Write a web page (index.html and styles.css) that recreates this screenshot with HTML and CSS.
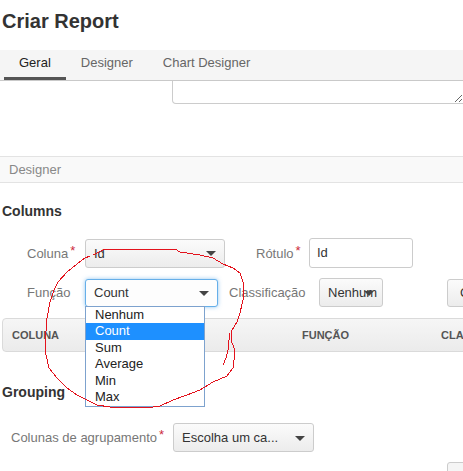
FILE: index.html
```html
<!DOCTYPE html>
<html lang="pt">
<head>
    <meta charset="UTF-8">
    <link rel="stylesheet" href="styles.css">
    <title>Criar Report</title>
</head>
<body>
    <header class="page-head">
        <h1>Criar Report</h1>
    </header>

    <nav class="tabs">
        <a class="tab active">Geral</a>
        <a class="tab">Designer</a>
        <a class="tab">Chart Designer</a>
    </nav>

    <div class="desc-wrap">
        <textarea class="desc"></textarea>
    </div>

    <div class="panel-title">Designer</div>

    <h2 class="section">Columns</h2>

    <div class="field-row row-col">
        <label class="lbl lbl-col">Coluna<span class="req">*</span></label>
        <div class="pick pick-col">Id<span class="caret"></span></div>
        <label class="lbl lbl-rot">Rótulo<span class="req">*</span></label>
        <div class="text-input">Id</div>
    </div>

    <div class="field-row row-fn">
        <label class="lbl lbl-col">Função</label>
        <div class="pick pick-fn">Count<span class="caret"></span>
            <ul class="options">
                <li>Nenhum</li>
                <li class="sel">Count</li>
                <li>Sum</li>
                <li>Average</li>
                <li>Min</li>
                <li>Max</li>
            </ul>
        </div>
        <label class="lbl lbl-cls">Classificação</label>
        <div class="pick pick-cls">Nenhum<span class="caret"></span></div>
        <button class="btn-add">Criar</button>
    </div>

    <div class="grid-head">
        <span>Coluna</span>
        <span>Função</span>
        <span>Classificação</span>
    </div>

    <h2 class="section grouping">Grouping</h2>

    <div class="field-row row-grp">
        <label class="lbl lbl-grp">Colunas de agrupamento<span class="req">*</span></label>
        <div class="pick pick-grp">Escolha um ca...<span class="caret"></span></div>
    </div>

    <div class="bottom-row">
        <span class="btn-stub"></span>
    </div>

    <!-- hand drawn marker around the open dropdown -->
    <svg class="scribble" width="463" height="471" viewBox="0 0 463 471">
        <polyline fill="none" stroke="#e3121c" stroke-width="1" shape-rendering="crispEdges"
            points="93,255 103,250 118,249 175,249 180,252 200,255 213,258 223,264 233,268 240,273 243,282 243,292 243,300 240,313 237,322 232,330 231,340 234,348 234,360 233,368 227,376 213,382 200,390 187,395 173,400 160,406 153,407 110,407 97,405 87,400 77,395 67,388 57,378 49,368 46,355 45,345 47,318 50,302 54,290 58,282 67,272 77,264 85,258 90,256" />
        <polyline fill="none" stroke="#e3121c" stroke-width="1" shape-rendering="crispEdges"
            points="223,365 226,358 228,350 229,340 229,333" />
    </svg>
</body>
</html>
```

FILE: styles.css
```css
html,
body {
    overflow: hidden;
}

body {
    margin: 0;
    position: relative;
    font-family: "Liberation Sans", Arial, sans-serif;
    font-size: 13px;
    color: #333;
    background: #fff;
}

.page-head h1 {
    margin: 0;
    height: 40px;
    padding: 10px 0 0 2px;
    font-size: 20px;
    line-height: 23px;
    font-weight: bold;
    color: #333;
}

.tabs {
    display: flex;
    height: 30px;
    padding-left: 4px;
    background: #f5f5f5;
    border-bottom: 1px solid #c9c9c9;
}

.tab {
    padding: 5px 15px 6px;
    line-height: 16px;
    border-bottom: 3px solid transparent;
    color: #666;
}

.tab.active {
    border-bottom-color: #555;
    color: #222;
}

.desc-wrap {
    padding-left: 172px;
    height: 23px;
}

.desc {
    display: block;
    box-sizing: border-box;
    width: 292px;
    height: 23px;
    margin: 0;
    padding: 0;
    border: 1px solid #ccc;
    border-top: 0;
    border-radius: 0 0 0 4px;
    font-family: inherit;
    resize: both;
}

.panel-title {
    margin-top: 52px;
    height: 25px;
    line-height: 25px;
    padding-left: 9px;
    background: #f9f9f9;
    border-top: 1px solid #e3e3e3;
    border-bottom: 1px solid #e3e3e3;
    color: #888;
}

.section {
    margin: 20px 0 0 2px;
    font-size: 14px;
    line-height: 17px;
    font-weight: bold;
    color: #333;
}

.section.grouping {
    margin-top: 32px;
}

.field-row {
    display: flex;
    align-items: center;
    padding-left: 27px;
}

.row-col {
    margin-top: 18px;
}

.row-fn {
    margin-top: 10px;
}

.row-grp {
    margin-top: 22px;
    padding-left: 11px;
}

.lbl {
    flex: none;
    color: #777;
}

.lbl-col {
    width: 58px;
}

.lbl-rot {
    width: 53px;
    margin-left: 31px;
}

.lbl-cls {
    width: 90px;
    margin-left: 11px;
}

.lbl-grp {
    margin-right: 9px;
}

.req {
    color: #cc2a3b;
    margin-left: 2px;
    position: relative;
    top: -3px;
}

.pick {
    position: relative;
    flex: none;
    box-sizing: border-box;
    height: 29px;
    line-height: 27px;
    padding: 0 8px;
    border: 1px solid #ccc;
    border-radius: 3px;
    background: linear-gradient(to bottom, #fbfbfb, #ececec);
    color: #333;
    white-space: nowrap;
}

.caret {
    position: absolute;
    right: 8px;
    top: 50%;
    margin-top: -2px;
    width: 0;
    height: 0;
    border-left: 5px solid transparent;
    border-right: 5px solid transparent;
    border-top: 5px solid #444;
}

.pick-col {
    width: 140px;
}

.pick-fn {
    width: 133px;
    height: 28px;
    line-height: 26px;
    background: #fdfdfd;
    border-color: #66afe9;
    box-shadow: 0 0 4px rgba(102, 175, 233, 0.7);
}

.pick-cls {
    width: 64px;
}

.pick-grp {
    width: 141px;
}

.text-input {
    flex: none;
    box-sizing: border-box;
    width: 104px;
    height: 30px;
    line-height: 28px;
    padding-left: 7px;
    border: 1px solid #ccc;
    border-radius: 3px;
    background: #fff;
}

.options {
    position: absolute;
    top: 100%;
    left: -1px;
    z-index: 2;
    box-sizing: border-box;
    width: 120px;
    margin: 0;
    padding: 0;
    list-style: none;
    background: #fff;
    border: 1px solid #7da2ce;
}

.options li {
    height: 16.5px;
    line-height: 16.5px;
    padding-left: 9px;
    color: #222;
}

.options li.sel {
    background: #1e90ff;
    color: #fff;
}

.btn-add {
    flex: none;
    box-sizing: border-box;
    width: 40px;
    height: 28px;
    margin-left: 64px;
    padding: 0 12px;
    border: 1px solid #ccc;
    border-radius: 3px;
    background: linear-gradient(to bottom, #fbfbfb, #ececec);
    font-family: inherit;
    font-size: 13px;
    color: #333;
    text-align: left;
    white-space: nowrap;
    overflow: hidden;
}

.grid-head {
    display: grid;
    grid-template-columns: 290px 139px auto;
    box-sizing: border-box;
    width: 500px;
    height: 34px;
    margin: 11px 0 0 2px;
    padding-left: 9px;
    border: 1px solid #dadada;
    border-radius: 4px;
    background: linear-gradient(to bottom, #f6f6f6, #ebebeb);
    line-height: 32px;
    font-size: 11px;
    font-weight: bold;
    text-transform: uppercase;
    color: #555;
}

.bottom-row {
    margin-top: 10px;
    padding-left: 447px;
    height: 20px;
}

.btn-stub {
    display: block;
    width: 40px;
    height: 24px;
    border: 1px solid #ccc;
    border-radius: 3px;
    background: #f5f5f5;
}

.scribble {
    position: absolute;
    top: 0;
    left: 0;
    z-index: 5;
    pointer-events: none;
}
```
